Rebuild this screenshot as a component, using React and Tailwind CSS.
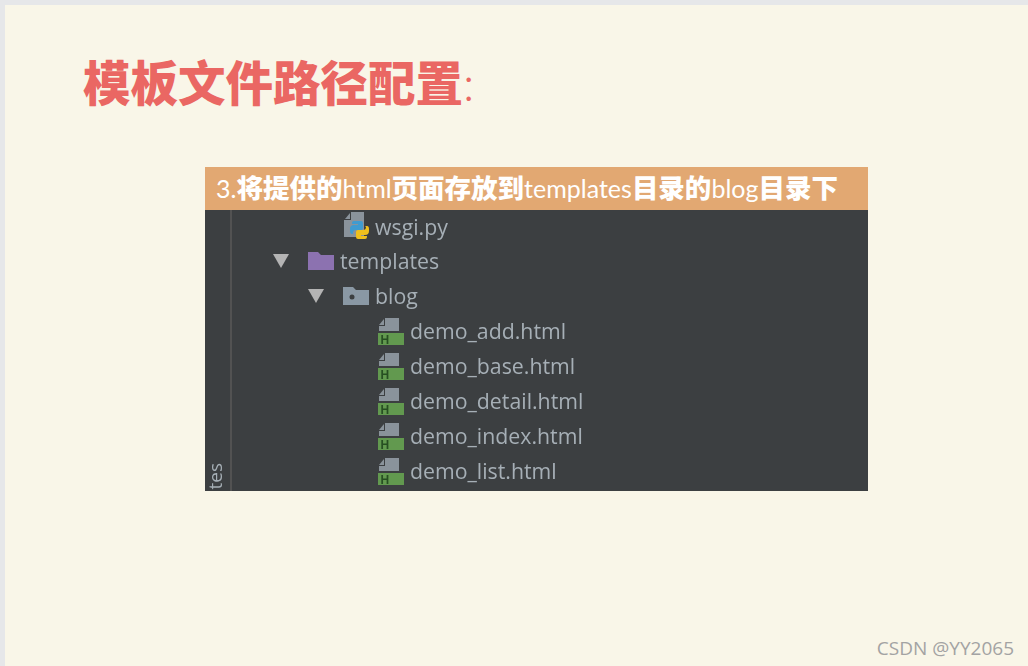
const FileHtml = () => (
  <svg width="28" height="27" viewBox="0 0 28 27" className="shrink-0 mt-[2px]">
    <path d="M7 0h14v13H1V8h6z" fill="#8a939b" />
    <path d="M6 1v6H1z" fill="#8a939b" />
    <rect x="0" y="15" width="26" height="12" fill="#62994f" />
    <text x="2.5" y="25.5" fontSize="12" fontWeight="700" fill="#274f22" fontFamily="'Liberation Sans',sans-serif">H</text>
  </svg>
);

const PyFile = () => (
  <svg width="26" height="28" viewBox="0 0 26 28" className="shrink-0 mt-[1px]">
    <path d="M7 0h13v25H0V8h7z" fill="#8a939b" />
    <path d="M6 1v6H1z" fill="#8a939b" />
    <path d="M10 9h7q2 0 2 2v5q0 2-2 2h-5q-3 0-3 3v1H8q-2 0-2-3v-2q0-4 4-4h4v-1H8v-1q0-2 2-2z" fill="#3f9bd0" />
    <path d="M21 14h2q2 0 2 3v2q0 4-4 4h-4v1h6v1q0 2-2 2h-7q-2 0-2-2v-5q0-2 2-2h5q3 0 3-3z" fill="#efc01d" />
  </svg>
);

const Folder = ({ color, dot }) => (
  <svg width="26" height="18" viewBox="0 0 26 18" className="shrink-0 block">
    <path d="M0 0h10l3 3h13v15H0z" fill={color} />
    {dot && <circle cx="9" cy="10" r="2.5" fill="#3c3f41" />}
  </svg>
);

const Arrow = () => (
  <svg width="16" height="14" viewBox="0 0 16 14" className="shrink-0">
    <path d="M0 0h16L8 14z" fill="#b4b4b4" />
  </svg>
);

const files = ["demo_add.html", "demo_base.html", "demo_detail.html", "demo_index.html", "demo_list.html"];
const rowText = "text-[21.3px] leading-none text-[#a6afb6]";

export default function App() {
  return (
    <div className="w-[1028px] h-[666px] overflow-hidden bg-[#e6e7e9] pt-[5px] pl-[5px] [font-family:Lato,'Noto_Sans_CJK_SC',sans-serif]">
      <div className="h-full bg-[#f9f6e8] flex flex-col relative">
        <h1 className="ml-[78px] mt-[47px] h-[62px] text-[47.5px] leading-[62px] font-black text-[#ea6763] whitespace-nowrap">
          模板文件路径配置<span className="font-light">:</span>
        </h1>
        <div className="ml-[200px] mt-[53px] w-[663px] h-[324px] flex flex-col overflow-hidden">
          <div className="h-[43px] shrink-0 bg-[#e2a872] pl-[11px] flex items-center text-white text-[25px] leading-none whitespace-nowrap">
            3.<b className="text-[26.5px] font-black">将提供的</b>html<b className="text-[26.5px] font-black">页面存放到</b>templates<b className="text-[26.5px] font-black">目录的</b>blog<b className="text-[26.5px] font-black">目录下</b>
          </div>
          <div className="flex-1 flex bg-[#3c3f41] overflow-hidden">
            <div className="w-[27px] shrink-0 border-r-2 border-[#525252] overflow-hidden pt-[253px]">
              <div className="[writing-mode:vertical-rl] rotate-180 text-[19px] leading-[20px] text-[#a6afb6] blur-[0.4px] [font-family:'Open_Sans',sans-serif]">
                templates
              </div>
            </div>
            <div className="flex-1 flex flex-col -mt-[2px] blur-[0.5px] [font-family:'Open_Sans',sans-serif]">
              <div className="h-[35px] shrink-0 flex items-center pl-[112px] gap-[5px]">
                <PyFile />
                <span className={`${rowText} mt-[2px]`}>wsgi.py</span>
              </div>
              <div className="h-[35px] shrink-0 flex items-center pl-[41px]">
                <Arrow />
                <span className="ml-[19px]"><Folder color="#8c72b0" /></span>
                <span className={`${rowText} ml-[6px]`}>templates</span>
              </div>
              <div className="h-[35px] shrink-0 flex items-center pl-[76px]">
                <Arrow />
                <span className="ml-[19px]"><Folder color="#8a98a4" dot /></span>
                <span className={`${rowText} ml-[6px]`}>blog</span>
              </div>
              {files.map((f) => (
                <div key={f} className="h-[35px] shrink-0 flex items-center pl-[146px] gap-[4px]">
                  <FileHtml />
                  <span className={rowText}>{f}</span>
                </div>
              ))}
            </div>
          </div>
        </div>
        <div className="absolute right-[14px] bottom-[8px] text-[19px] leading-none text-[#a3a3a3] [font-family:'Open_Sans',sans-serif]">
          CSDN @YY2065
        </div>
      </div>
    </div>
  );
}
